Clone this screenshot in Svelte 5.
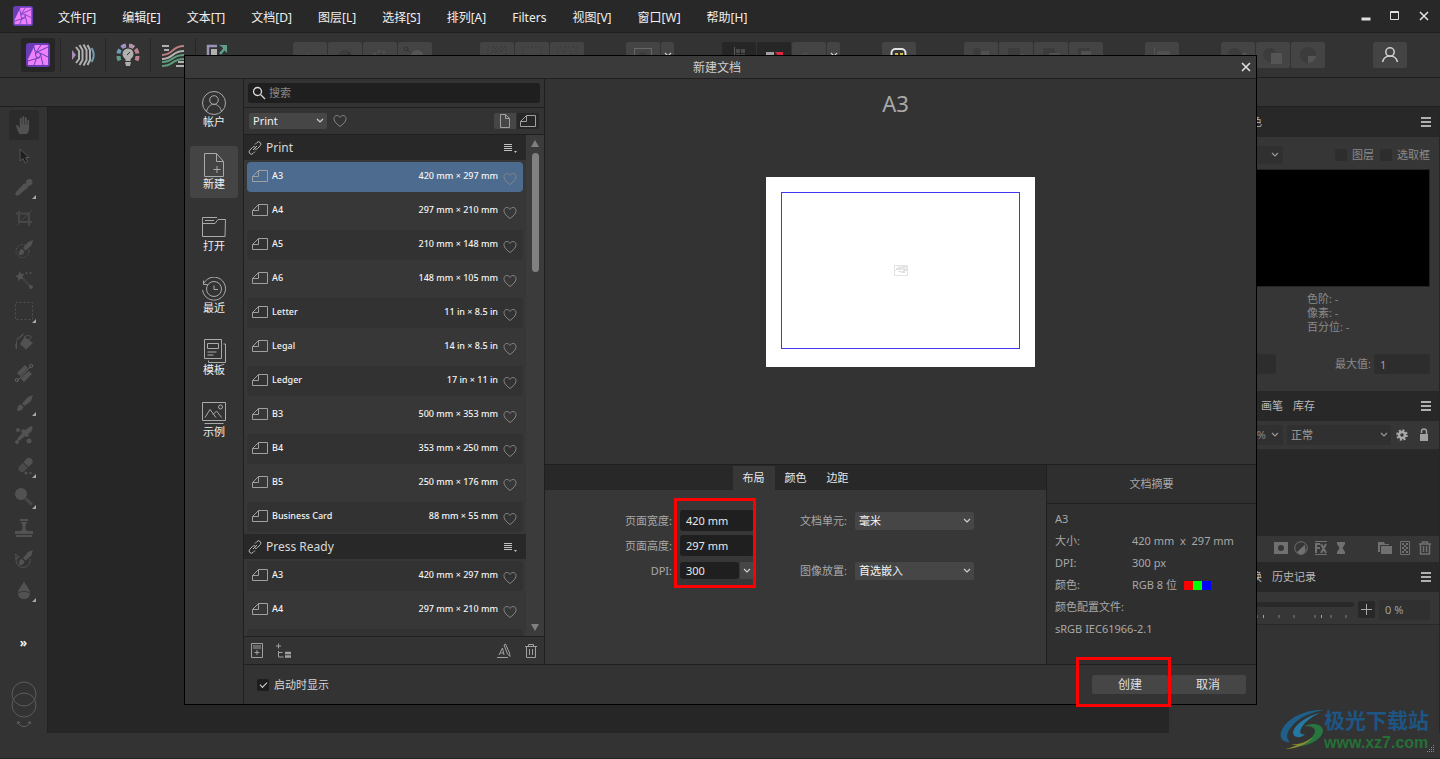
<script lang="ts">
	interface Preset {
		name: string;
		size: string;
	}

	interface Group {
		title: string;
		presets: Preset[];
	}

	const menus = ['文件[F]', '编辑[E]', '文本[T]', '文档[D]', '图层[L]', '选择[S]', '排列[A]', 'Filters', '视图[V]', '窗口[W]', '帮助[H]'];

	const groups: Group[] = [
		{
			title: 'Print',
			presets: [
				{ name: 'A3', size: '420 mm × 297 mm' },
				{ name: 'A4', size: '297 mm × 210 mm' },
				{ name: 'A5', size: '210 mm × 148 mm' },
				{ name: 'A6', size: '148 mm × 105 mm' },
				{ name: 'Letter', size: '11 in × 8.5 in' },
				{ name: 'Legal', size: '14 in × 8.5 in' },
				{ name: 'Ledger', size: '17 in × 11 in' },
				{ name: 'B3', size: '500 mm × 353 mm' },
				{ name: 'B4', size: '353 mm × 250 mm' },
				{ name: 'B5', size: '250 mm × 176 mm' },
				{ name: 'Business Card', size: '88 mm × 55 mm' }
			]
		},
		{
			title: 'Press Ready',
			presets: [
				{ name: 'A3', size: '420 mm × 297 mm' },
				{ name: 'A4', size: '297 mm × 210 mm' }
			]
		}
	];

	// 24 x 24, stroked
	const sections = [
		{ label: '帐户', icon: '<circle cx="12" cy="12" r="11.5"/><circle cx="12" cy="9" r="4.3"/><path d="M4.5 20.5c1-4.500 4-7.200 7.500-7.200s6.500 2.700 7.500 7.200"/>' },
		{ label: '新建', icon: '<path d="M2.500.5h12l7 8v15h-19zM14.500.5v8h7M15 13v7M11.500 16.500h7"/>' },
		{ label: '打开', icon: '<path d="M.5 5.500v16h22.500l.5-17h-7.500l-3 4H.5M.5 5.500V2.500H15M3 5.500h9"/>' },
		{ label: '最近', icon: '<circle cx="12" cy="12" r="7.500"/><path d="M12 8.500v4h4M2 6A11.500 11.500 0 1 1 .6 13M1.500 3.500v4h4"/>' },
		{ label: '模板', icon: '<path d="M2.500.5h17v19h-17zM5.500 4.500h11v5h-11zM5.500 13h9M5.500 16h6M21.500 5h2v18.500h-17v-2"/>' },
		{ label: '示例', icon: '<path d="M.5 1.500h23v18H.5zM3 16.500l5-8 6 8M11 13.500l3.500-3.500 5 6.500M2.500 22.500h19"/><circle cx="18.500" cy="6" r="2"/>' }
	];

	// 18 x 18, filled
	const tools = [
		{ label: '手形', more: false, icon: '<path d="M4.500 18C3 15.500 1.500 11.500 1.300 10.200c0-1.200 1.300-1.500 1.900-.4l1.600 2.400V2.600c0-1.300 1.900-1.300 1.900 0v5.600h.6V1.300c0-1.500 2-1.500 2 0v6.900h.6V2.200c0-1.400 1.900-1.400 1.900 0v6.500h.6V4.600c0-1.300 1.700-1.300 1.700 0v8c0 2.500-1.200 4.200-2.300 5.400z"/>' },
		{ label: '移动', more: false, icon: '<path fill="#1f1f1f" stroke="#555" d="M5 2v12l3-2.500 2 4.500 2.500-1.200-2-4.300H14z"/>' },
		{ label: '颜色拾取器', more: true, icon: '<path d="M11 3c3-3.500 7-2 6.500 1.500-.2 2-2.500 3.500-4.500 3.500l-2-1.500zM9.500 5l4 4-9 7.500-2.500 1.500-2-2 1.500-2.500z"/>' },
		{ label: '裁剪', more: false, icon: '<path fill="none" stroke="#474747" stroke-width="2" d="M4 2v11h13M1 4.500h13V17"/><path stroke="#474747" d="M2 16L17 1"/>' },
		{ label: '选择画笔', more: false, icon: '<circle cx="7.500" cy="11" r="6.500" fill="none" stroke="#555" stroke-dasharray="2 1.500"/><path d="M18 0l-5 2-5 6 2.500 2.500 6-5zM7 9l2.500 2.500c-1 3-3 4-6 3.500.8-1 .5-1.500.7-3C4.500 10 5.500 9 7 9z"/>' },
		{ label: '魔棒', more: false, icon: '<path d="M5 0l1.200 3 3.300-.4-2 2.700 1.400 3-3.200-.6L3.300 10 3 6.800 0 5.300l3-1.300z"/><path stroke="#3f3f3f" stroke-width="2.500" d="M8 8l8 8"/><circle cx="16" cy="16" r="2"/><circle cx="11.500" cy="2" r="1"/><circle cx="15.500" cy="2" r="1"/>' },
		{ label: '选框', more: true, icon: '<rect x=".5" y=".5" width="17" height="17" fill="none" stroke="#505050" stroke-dasharray="2 2"/>' },
		{ label: '填充', more: false, icon: '<path d="M9 0L2 5.500 0 13l2 4V7l6-4.500zM9.500 4l8.500 6-7 6.500L5 11z"/><path fill="none" stroke="#555" d="M9 4c3-2 7-2 7 .5S10 7 10 5"/>' },
		{ label: '渐变', more: false, icon: '<path d="M10 1l4 4-8 8-4-4zM14 7l3 3-8 8-4-4z"/><path stroke="#333" stroke-width="2" d="M3 16L16 2"/><path stroke="#666" d="M3 16L15 3"/><circle cx="1.800" cy="16.200" r="1.500" fill="#333" stroke="#666"/><circle cx="16.200" cy="1.800" r="1.500" fill="#333" stroke="#666"/>' },
		{ label: '画笔', more: true, icon: '<path d="M18 0l-5 2-6 6.500L9.500 11l6.500-5zM6 9.500L8.500 12c-.5 3-3.500 4.500-7 3.500 1-1 .6-1.800 1.300-3.300C3.400 10.200 4.700 9.500 6 9.500z"/>' },
		{ label: '像素', more: false, icon: '<path d="M16 0l2 1-2 5-3 2 1 2-3 1-1-1-6 5-2-2 5-6-1-2 2-2 2 1z"/><circle cx="14" cy="15" r="2.500"/><circle cx="2" cy="16" r="2"/><circle cx="3" cy="4" r="2"/>' },
		{ label: '橡皮擦', more: true, icon: '<path d="M12 1.500c1-1 3-1 4.500.5s1.500 3 .5 4.500L13.500 10 8.500 5z"/><path fill="#4a4a4a" d="M7.800 5.700l5 5-3.500 3.500c-1.500 1.300-3.500 1.300-5-.2s-1.200-3.500 0-4.700z"/><circle cx="11" cy="16" r="1.500"/><circle cx="15.500" cy="16" r="1.200"/>' },
		{ label: '减淡', more: true, icon: '<circle cx="6" cy="6" r="6"/><path fill="#484848" d="M11.500 9.500l6.500 6-2 2.500-6.500-6.500z"/>' },
		{ label: '克隆', more: false, icon: '<path d="M5 0h8v2H5zM6 3h6l-1.500 4v3l2 2H18v3H0v-3h5.500l2-2V7zM1 16h16v2H1z"/>' },
		{ label: '撤消画笔', more: false, icon: '<path fill="none" stroke="#555" d="M2 7a7 7 0 1 0 13 2M0 4l4 3-4 2z"/><path d="M18 0l-5 2-5 6 2.500 2.500 6-5zM7 9l2.500 2.500c-1 3-3 4-6 3.500 1-1 .5-1.500.7-3C4.500 10 5.500 9 7 9z"/>' },
		{ label: '模糊', more: true, icon: '<path d="M9 0c1 4 6 7.500 6 12 0 4-2.500 6-6 6s-6-2-6-6C3 7.500 8 4 9 0z"/><path fill="none" stroke="#333" d="M3.500 12c3-2 8-2 11 0"/>' }
	];

	const personas = [
		{
			label: 'Liquify',
			icon: '<path fill="#a98cbc" d="M1 7l4 5-4 5z"/><g fill="none" stroke="#b0b0b0" stroke-width="2"><path d="M5 4l3 4v8l-3 4M8.500 2l3 5v10l-3 5M12.500 1.500l3 5.500v10l-3 5.500M16.500 2l2.500 5v10l-2.500 5"/><path stroke="#6e9fb8" d="M20.500 5c3 4 3 10 0 14"/></g>'
		},
		{
			label: 'Develop',
			icon: '<g fill="none" stroke-width="4"><path stroke="#5d9d84" d="M3.500 17.500A10 10 0 0 1 2.500 13"/><path stroke="#6e9fb8" d="M2.500 10.500A10 10 0 0 1 4 6.500"/><path stroke="#a292c4" d="M5.500 4.500A10 10 0 0 1 10 2.500"/><path stroke="#b793b0" d="M13 2.500A10 10 0 0 1 18 4.500"/><path stroke="#bd8490" d="M19.500 6A10 10 0 0 1 21.500 10.500M21.500 13A10 10 0 0 1 20.500 17.500"/></g><circle cx="12" cy="11" r="5.500" fill="#b0b0b0"/><path fill="#b0b0b0" d="M9.500 15h5v3h-5zM9 19h6l-1 4h-4z"/><path stroke="#333" d="M11 12l3-3"/>'
		},
		{
			label: 'Tone Mapping',
			icon: '<g fill="none" stroke-width="2"><path stroke="#b0b0b0" d="M1 3h7M3 7h5M17 19h6M15 23h8M1 16c12 0 9-8 22-8"/><path stroke="#bd8080" d="M1 12c12 0 9-9 22-9"/><path stroke="#5d9d7c" d="M1 19c12 0 9-7 22-7M1 23c12 0 9-7 22-7"/></g>'
		},
		{
			label: 'Export',
			icon: '<path fill="none" stroke="#9a93b8" stroke-width="2.500" d="M2 20V3h9"/><path fill="#b0b0b0" d="M5 6h6v14H5z"/><path fill="none" stroke="#5d9d8c" stroke-width="2.500" d="M14 11l6-7"/><path fill="#5d9d8c" d="M13 2h8v8l-2-2-3-4z"/>'
		}
	];

	const toolGroups = [
		{ wide: true, items: ['<path stroke="#4f4f4f" d="M5 14l8-4"/>', '<circle cx="12" cy="14" r="7"/><path fill="#353535" d="M12 14l5-6v8z"/>', '<circle cx="12" cy="14" r="6" stroke-dasharray="3 2" stroke="#4f4f4f" stroke-width="3" fill="none"/>', '<path fill="none" stroke="#333" d="M4 6l8 8"/><circle cx="3" cy="6" r="2" fill="none" stroke="#333"/><circle cx="14" cy="14" r="7" fill="#555"/>'] },
		{ wide: true, items: ['<rect x="3" y="4" width="18" height="14" fill="none" stroke="#383838" stroke-dasharray="2 2"/><path stroke="#383838" d="M6 10l5-5M10 10l5-5M14 10l5-5"/>', '<rect x="3" y="4" width="18" height="14" fill="none" stroke="#383838" stroke-dasharray="2 2"/>', '<path fill="none" stroke="#383838" stroke-dasharray="2 2" d="M3 14V4h18v10M8 14V8h8v6"/>'] },
		{ wide: false, drop: true, items: ['<rect x="3.500" y="5.500" width="17" height="14" fill="none" stroke="#666"/><circle cx="12" cy="13" r="4"/>'] },
		{ wide: true, drop: true, dark: 2, items: ['<path stroke="#5a5a5a" d="M7.500 4v14"/><path fill="#4a4a4a" d="M9 6h4v4H9zM14 6h4v4h-4zM9 11h4v4H9zM14 11h4v4h-4z"/>', '<path fill="#a0a0a0" d="M4 9h8v10H4z"/><path fill="#e02840" d="M13 9h8v10z"/>', '<path stroke="#555" d="M5 12l5-2"/>'] },
		{ wide: false, items: ['<rect x="4.500" y="6" width="14" height="14" rx="4" fill="#333" stroke="#e0e0e0" stroke-width="2"/><path fill="#d8b84a" d="M8 10h3v3H8zM13 10h3v3h-3z"/>'] },
		{ wide: true, items: ['<path fill="#505050" d="M10 8h10v10H10z"/><circle cx="8" cy="9" r="4"/>', '<path d="M4 5h12v12H4z"/><path fill="#505050" d="M16 11h5v6h-5z"/>', '<path d="M4 5h12v10H4z"/><path fill="#505050" d="M10 10h11v8H10z"/>', '<path d="M4 5h12v10H4z"/><path fill="#505050" d="M7 8h10v8H7z"/>'] },
		{ wide: false, items: ['<path stroke="#555" d="M4.500 4v14"/><path fill="#505050" d="M7 8h13v5H7z"/>'] },
		{ wide: false, items: ['<circle cx="9" cy="12" r="7"/><path fill="#555" d="M17 10h3v8h-3z"/>', '<circle cx="9" cy="12" r="7"/><path fill="#555" d="M10 10h11v11H10z"/>', '<circle cx="12" cy="12" r="8"/><path fill="#555" d="M12 13h8c0 4-4 7-8 7z"/>'] }
	];

	const layerActions = [
		'<path fill-rule="evenodd" d="M0 1h14v12H0zM7 4a3 3 0 1 0 0 6 3 3 0 0 0 0-6z"/>',
		'<circle cx="7" cy="7" r="6.300" fill="none" stroke="#707070"/><path d="M11 3.500v3A4.500 4.500 0 0 1 3 11z"/>',
		'<path d="M1 0h12v1H1zM1 13h12v1H1z"/><path fill="none" stroke="#707070" stroke-width="2" d="M2 12V3h4M2 7h4M7 3l5 9M12 3l-5 9"/>',
		'<path d="M3 1h8v2L8.500 7 11 11v2H3v-2l2.500-4L3 3z"/>'
	];

	const layerManage = [
		'<path d="M0 1h6l1 2h4v1H2v7H0zM3 5h11v8H3z"/>',
		'<path fill="none" stroke="#707070" d="M2.500.5h9v13h-9z"/><path d="M4 2h2v2H4zM8 2h2v2H8zM6 4h2v2H6zM4 6h2v2H4zM8 6h2v2H8zM6 8h2v2H6zM4 10h2v2H4zM8 10h2v2H8z"/>',
		'<path fill="none" stroke="#707070" stroke-width="1.500" d="M1 3h12M4.500 3V1h5v2M2.500 3v10h9V3M5.500 5v6M8.500 5v6"/>'
	];

	const ticks = [77, 99, 114, 135, 151, 166];
	const brightTicks = [84, 142];

	const tabs = ['布局', '颜色', '边距'];

	let activeSection = $state(1);
	let activeTab = $state(0);
	let selected = $state('0-0');
	let search = $state('');
	let category = $state('Print');
	let width = $state('420 mm');
	let height = $state('297 mm');
	let dpi = $state('300');
	let unit = $state('毫米');
	let placement = $state('首选嵌入');
	let showOnStart = $state(true);
</script>

{#snippet chevron()}
	<svg class="chevron" viewBox="0 0 8 6" width="8" height="6" aria-hidden="true"><path d="M1 1l3 3 3-3" /></svg>
{/snippet}

{#snippet heart()}
	<svg class="heart" viewBox="0 0 14 14" width="14" height="14" aria-hidden="true">
		<path d="M7 12.500C4.500 10.500 1 8 1 4.600 1 2.800 2.200 1.500 3.900 1.500 5.200 1.500 6.300 2.200 7 3.400c.7-1.200 1.800-1.900 3.100-1.900C11.800 1.500 13 2.800 13 4.600c0 3.400-3.500 5.900-6 7.900z" />
	</svg>
{/snippet}

{#snippet landscape()}
	<svg class="page-icon" viewBox="0 0 17 14" width="17" height="14" aria-hidden="true">
		<path d="M6.500 1.500h9v11H.5V7.500zM6.500 1.500v6H.5" />
	</svg>
{/snippet}

{#snippet appLogo(size: number)}
	<svg viewBox="0 0 24 24" width={size} height={size} aria-hidden="true">
		<rect width="24" height="24" rx="3" fill="#6a3db8" />
		<path fill="#ee80fb" d="M9 2h13v20H2v-6z" />
		<path fill="none" stroke="#6a3db8" d="M8 4l2 8M15 2l-5.500 8M22 4l-11 5M22 14l-8-4M17 22l-2.500-11M2 18l12-3.500M8 22l3-8" />
		<circle cx="12" cy="12" r="2.500" fill="#ee80fb" stroke="#6a3db8" />
	</svg>
{/snippet}

{#snippet burger()}
	<button class="burger" aria-label="面板选项"><i></i><i></i><i></i></button>
{/snippet}

<div class="app">
	<header class="titlebar">
		<span class="logo">{@render appLogo(20)}</span>
		<nav class="menus">
			{#each menus as menu}
				<button>{menu}</button>
			{/each}
		</nav>
		<div class="window-controls">
			<button aria-label="最小化"><svg viewBox="0 0 10 10" width="10" height="10"><path d="M.5 8h9" stroke-width="3" /></svg></button>
			<button aria-label="最大化"><svg viewBox="0 0 10 10" width="10" height="10"><path d="M.5.5h8v8h-8zM0 1.500h9" /></svg></button>
			<button aria-label="关闭"><svg viewBox="0 0 10 10" width="10" height="10"><path d="M1 1l8 8M9 1L1 9" stroke-width="1.600" /></svg></button>
		</div>
	</header>

	<div class="toolbar">
		<div class="personas">
			<button class="persona current" aria-label="Photo">{@render appLogo(24)}</button>
			{#each personas as persona}
				<span class="divider"></span>
				<button class="persona" aria-label={persona.label}>
					<svg viewBox="0 0 24 24" width="24" height="24">{@html persona.icon}</svg>
				</button>
			{/each}
		</div>
		{#each toolGroups as group, g}
			<div class="tool-group" class:wide={group.wide}>
				{#each group.items as item, i}
					<button class:dark={i < (group.dark ?? 0)} aria-label="工具栏 {g + 1}-{i + 1}">
						<svg viewBox="0 0 24 24" width="24" height="24" fill="#3c3c3c">{@html item}</svg>
					</button>
				{/each}
				{#if group.drop}
					<button class="drop" aria-label="更多选项">{@render chevron()}</button>
				{/if}
			</div>
		{/each}
		<div class="tool-group wide">
			<button aria-label="帐户">
				<svg viewBox="0 0 24 24" width="24" height="24" fill="none" stroke="#d0d0d0" stroke-width="1.500">
					<circle cx="12" cy="9" r="4.200" /><path d="M4.500 19c1-4 4-6 7.500-6s6.500 2 7.500 6" />
				</svg>
			</button>
		</div>
	</div>

	<div class="context"></div>

	<div class="workspace">
		<aside class="tools">
			{#each tools as tool, i}
				<button class="tool" class:current={i === 0} aria-label={tool.label}>
					<svg viewBox="0 0 18 18" width="18" height="18" fill="#525252">{@html tool.icon}</svg>
					{#if tool.more}<span class="corner"></span>{/if}
				</button>
			{/each}
			<button class="expand" aria-label="更多工具">»</button>
			<svg class="wells" viewBox="0 0 28 50" width="28" height="50" aria-hidden="true">
				<circle cx="14" cy="14" r="12" /><circle cx="14" cy="25" r="12" />
				<path d="M8 42c1 6 11 6 12 0M7 44l1-2.500 2.500 1.500M21 44l-1-2.500-2.500 1.500" />
			</svg>
		</aside>

		<main class="canvas"></main>

		<aside class="panels">
			<div class="panel-head"><div class="panel-tabs"><button>颜色</button></div>{@render burger()}</div>
			<div class="histogram">
				<div class="histogram-top">
					<button class="well" aria-label="通道">{@render chevron()}</button>
					<label><input type="checkbox" />图层</label>
					<label><input type="checkbox" />选取框</label>
				</div>
				<div class="graph"></div>
				<div class="stats">
					<span>色阶: -</span>
					<span>像素: -</span>
					<span>百分位: -</span>
				</div>
				<div class="limits">
					<input class="min" aria-label="最小值" />
					<label for="max">最大值:</label>
					<input id="max" value="1" />
				</div>
			</div>

			<div class="panel-head"><div class="panel-tabs brushes"><button>画笔</button><button>库存</button></div>{@render burger()}</div>
			<div class="layer-bar">
				<button class="well opacity">% {@render chevron()}</button>
				<span class="select blend">
					<select aria-label="混合模式"><option>正常</option></select>
					{@render chevron()}
				</span>
				<button class="mini" aria-label="混合选项">
					<svg viewBox="0 0 14 14" width="12" height="12" fill="none" stroke="#a8a8a8">
						<circle cx="7" cy="7" r="3.500" stroke-width="3" /><circle cx="7" cy="7" r="5.500" stroke-width="2.500" stroke-dasharray="2.300 2" />
					</svg>
				</button>
				<button class="mini" aria-label="锁定">
					<svg viewBox="0 0 14 14" width="14" height="14"><path fill="#a0a0a0" d="M3 6h8v7H3z" /><path fill="none" stroke="#a0a0a0" stroke-width="1.500" d="M4.500 5V3.500a2.500 2.500 0 0 1 5 0V6" /></svg>
				</button>
			</div>
			<div class="layers"></div>
			<div class="layer-actions">
				{#each layerActions as action, i}
					<button aria-label="图层操作 {i + 1}"><svg viewBox="0 0 14 14" width="14" height="14" fill="#707070">{@html action}</svg></button>
				{/each}
				<span class="spacer"></span>
				{#each layerManage as action, i}
					<button aria-label="图层管理 {i + 1}"><svg viewBox="0 0 14 14" width="14" height="14" fill="#707070">{@html action}</svg></button>
				{/each}
			</div>

			<div class="panel-head"><div class="panel-tabs"><button>变换</button><button>历史记录</button></div>{@render burger()}</div>
			<div class="history">
				<div class="slider">
					<input type="range" min="0" max="100" value="0" aria-label="历史位置" />
					<svg viewBox="0 0 174 3" width="174" height="3" aria-hidden="true">
						{#each ticks as x}<rect {x} width="2" height="3" fill="#5a5a5a" />{/each}
						{#each brightTicks as x}<rect {x} width="1" height="3" fill="#a0a0a0" />{/each}
					</svg>
				</div>
				<button class="plus" aria-label="添加"><svg viewBox="0 0 11 11" width="11" height="11"><path d="M5.500 0v11M0 5.500h11" stroke="#a8a8a8" /></svg></button>
				<input value="0 %" aria-label="位置" />
			</div>
			<div class="empty"></div>
		</aside>
	</div>

	<footer class="status">
		<svg viewBox="0 0 8 8" width="8" height="8" fill="#8a8a8a" aria-hidden="true">
			<path d="M6 0h1v1H6zM4 2h1v1H4zM6 2h1v1H6zM2 4h1v1H2zM4 4h1v1H4zM6 4h1v1H6zM0 6h1v1H0zM2 6h1v1H2zM4 6h1v1H4zM6 6h1v1H6z" />
		</svg>
	</footer>

	<div class="dialog" role="dialog" aria-labelledby="dialog-title">
		<div class="dialog-title">
			<h1 id="dialog-title">新建文档</h1>
			<button aria-label="关闭对话框"><svg viewBox="0 0 10 10" width="10" height="10"><path d="M1 1l8 8M9 1L1 9" /></svg></button>
		</div>

		<nav class="sections">
			{#each sections as section, i}
				<button class:current={activeSection === i} onclick={() => (activeSection = i)}>
					<svg viewBox="0 0 24 24" width="24" height="24">{@html section.icon}</svg>
					{section.label}
				</button>
			{/each}
		</nav>

		<div class="presets">
			<div class="search-row">
				<label class="search">
					<svg viewBox="0 0 14 14" width="14" height="14" aria-hidden="true"><circle cx="5.500" cy="5.500" r="4" /><path d="M8.500 8.500l4.500 4.500" /></svg>
					<input type="text" placeholder="搜索" aria-label="搜索" bind:value={search} />
				</label>
			</div>
			<div class="category-row">
				<span class="select category">
					<select aria-label="类别" bind:value={category}><option>Print</option></select>
					{@render chevron()}
				</span>
				<button class="fav" aria-label="收藏">{@render heart()}</button>
				<button class="orient current" aria-label="纵向">
					<svg class="page-icon" viewBox="0 0 12 14" width="12" height="14"><path d="M1.500.5h5l4 4v9h-9zM6.500.5v4h4" /></svg>
				</button>
				<button class="orient" aria-label="横向">{@render landscape()}</button>
			</div>

			<div class="list-area">
				<div class="list">
					{#each groups as group, g}
						<h2>
							<svg viewBox="0 0 14 14" width="14" height="14" aria-hidden="true">
								<path d="M7 3.500L9 1.500a2 2 0 0 1 3.200 3.200L9.500 7.500a2 2 0 0 1-3.200 0M7 10.500L5 12.500a2 2 0 0 1-3.200-3.200L4.500 6.500a2 2 0 0 1 3.200 0M5 9l4-4" />
							</svg>
							{group.title}
							<button aria-label="{group.title} 选项">
								<svg viewBox="0 0 13 10" width="13" height="10" fill="#c0c0c0"><path d="M0 1h8v1H0zM0 3h8v1H0zM0 5h8v1H0zM0 7h8v1H0zM10 8h3l-1.500 2z" /></svg>
							</button>
						</h2>
						<ul>
							{#each group.presets as preset, i}
								<li class:striped={i % 2 === 0} class:selected={selected === `${g}-${i}`}>
									<button class="preset" onclick={() => (selected = `${g}-${i}`)}>
										{@render landscape()}
										<span class="name">{preset.name}</span>
										<span class="size">{preset.size}</span>
									</button>
									<button class="fav" aria-label="收藏 {preset.name}">{@render heart()}</button>
								</li>
							{/each}
							{#if g === groups.length - 1}
								<li class="striped"></li>
							{/if}
						</ul>
					{/each}
				</div>
				<div class="scrollbar">
					<span class="up"></span>
					<span class="thumb"></span>
					<span class="down"></span>
				</div>
			</div>

			<div class="list-actions">
				<button aria-label="添加预设"><svg viewBox="0 0 16 16" width="16" height="16"><path d="M2.500.5h11v14h-11zM4 3h8M4 5h8M8 7v5M5.500 9.500h5" /></svg></button>
				<button aria-label="添加类别"><svg viewBox="0 0 16 16" width="16" height="16"><path d="M0 3h5M2.500.5v5M2.500 8v6h5M2.500 9.500h4" /><path d="M9 10h6M9 13.500h6" stroke-width="2.500" /></svg></button>
				<span class="spacer"></span>
				<button aria-label="重命名"><svg viewBox="0 0 16 16" width="16" height="16"><path d="M1 14.500h11M3 12l3.500-7L8 12M4 10h4M8 2l1.500-1 4 9 .5 3.500-2.500-2.500z" /></svg></button>
				<button aria-label="删除"><svg viewBox="0 0 16 16" width="16" height="16"><path d="M2 3.500h12M5.500 3.500v-2h5v2M3.500 3.500v11h9v-11M6.500 6v6M9.500 6v6" /></svg></button>
			</div>
		</div>

		<div class="preview">
			<h2>A3</h2>
			<div class="paper">
				<div class="margins">
					<svg viewBox="0 0 14 11" width="14" height="11" aria-hidden="true"><rect x=".5" y=".5" width="13" height="10" fill="none" stroke="#e4e4e4" /><path fill="#e2e2e2" fill-rule="evenodd" d="M1 1h12v5h-2v2H7V7H4V6H1V5h1V3h2V2h3v1h1v2H2v1h7V4H8V2h4v2h-1V2H9z" /></svg>
				</div>
			</div>
		</div>

		<div class="settings">
			<div class="tabs" role="tablist">
				{#each tabs as tab, i}
					<button role="tab" aria-selected={activeTab === i} class:current={activeTab === i} onclick={() => (activeTab = i)}>{tab}</button>
				{/each}
			</div>
			<div class="form">
				<label for="page-width">页面宽度:</label>
				<input id="page-width" bind:value={width} />
				<label for="unit">文档单元:</label>
				<span class="select">
					<select id="unit" bind:value={unit}><option>毫米</option></select>
					{@render chevron()}
				</span>
				<label for="page-height">页面高度:</label>
				<input id="page-height" bind:value={height} />
				<label for="dpi">DPI:</label>
				<span class="combo">
					<input id="dpi" bind:value={dpi} />
					<button aria-label="DPI 选项">{@render chevron()}</button>
				</span>
				<label for="placement">图像放置:</label>
				<span class="select">
					<select id="placement" bind:value={placement}><option>首选嵌入</option></select>
					{@render chevron()}
				</span>
				<div class="mark"></div>
			</div>
		</div>

		<section class="summary">
			<h2>文档摘要</h2>
			<dl>
				<dt class="line">A3</dt>
				<dt>大小:</dt>
				<dd>420 mm&nbsp; x &nbsp;297 mm</dd>
				<dt>DPI:</dt>
				<dd>300 px</dd>
				<dt>颜色:</dt>
				<dd>RGB 8 位 <span class="rgb"><i class="r"></i><i class="g"></i><i class="b"></i></span></dd>
				<dt class="line">颜色配置文件:</dt>
				<dd class="line">sRGB IEC61966-2.1</dd>
			</dl>
		</section>

		<div class="dialog-footer">
			<label><input type="checkbox" bind:checked={showOnStart} />启动时显示</label>
			<span class="create"><button>创建</button><span class="mark"></span></span>
			<button>取消</button>
		</div>
	</div>

	<div class="watermark">
		<svg viewBox="0 0 44 42" width="44" height="42" aria-hidden="true">
			<path fill="#1f5f8c" d="M44 1C26 0 6 9 1 23c-2 7 4 11 9 10C4 28 8 20 17 12 24 6 34 3 44 1z" />
			<path fill="#2478a4" d="M40 4C27 7 15 15 13 23c0 6 8 7 12 2-4 1-6-1-4-5 2-5 9-12 19-16z" />
			<path fill="#27753f" d="M24 17c9-4 18-2 19 4 0 8-12 16-25 16 9-4 17-10 17-15 0-4-5-5-11-5z" />
			<path fill="#8a8f2e" d="M5 40c10 0 22-4 28-12-8 6-15 8-22 7 2 1 4 1 6 1-4 2-8 3-12 4z" />
		</svg>
		<div>
			<strong>极光下载站</strong>
			<em>www.xz7.com</em>
		</div>
	</div>
</div>

<style>
	:global(body) {
		background: #333;
	}

	.app {
		--line: #1f1f1f;
		--bar: #282828;
		--face: #333;
		--control: #464646;
		position: relative;
		display: grid;
		grid-template-rows: 33px 45px 29px 1fr 26px;
		height: 100vh;
		min-height: 740px;
		overflow: hidden;
		box-sizing: border-box;
		background: var(--face);
		color: #d8d8d8;
		font: 11px/14px 'Noto Sans', 'Noto Sans CJK SC', sans-serif;
	}

	.app :is(div, span, button, input, select, h1, h2, aside, header, footer) {
		box-sizing: border-box;
	}

	button,
	input,
	select {
		margin: 0;
		padding: 0;
		border: 0;
		background: none;
		color: inherit;
		font: inherit;
		min-width: 0;
	}

	button {
		display: flex;
		align-items: center;
		justify-content: center;
	}

	svg {
		flex: none;
		display: block;
	}

	h1,
	h2,
	ul,
	dl,
	dd {
		margin: 0;
		padding: 0;
		font-weight: 400;
	}

	input[type='checkbox'] {
		appearance: none;
		width: 12px;
		height: 12px;
		border-radius: 2px;
		background: #1d1d1d;
		display: grid;
		place-items: center;
	}

	input[type='checkbox']:checked::after {
		content: '';
		width: 6px;
		height: 3px;
		border: solid #d8d8d8;
		border-width: 0 0 1px 1px;
		transform: translateY(-1px) rotate(-45deg);
	}

	.spacer {
		flex: 1;
	}

	.chevron {
		fill: none;
		stroke: #d0d0d0;
		stroke-width: 1.2;
		pointer-events: none;
	}

	.heart {
		fill: none;
		stroke: #858585;
	}

	.page-icon {
		fill: none;
		stroke: #a0a0a0;
	}

	.select {
		display: grid;
		grid-template-columns: 1fr;
		align-items: center;
		height: 18px;
		border-radius: 2px;
		background: var(--control);
	}

	.select > :global(*) {
		grid-area: 1 / 1;
	}

	.select select {
		appearance: none;
		width: 100%;
		padding: 0 16px 0 4px;
		outline: none;
	}

	.select .chevron {
		justify-self: end;
		margin-right: 3px;
	}

	.mark {
		position: absolute;
		border: 3px solid #f00;
		pointer-events: none;
	}

	/* application frame */

	.titlebar {
		display: flex;
		align-items: center;
		padding: 0 11px 0 13px;
		background: var(--bar);
		border-bottom: 1px solid var(--line);
		color: #f0f0f0;
		font-size: 12px;
	}

	.menus {
		display: flex;
		gap: 26px;
		margin-left: 25px;
		padding-top: 3px;
		flex: 1;
	}

	.menus button {
		white-space: nowrap;
	}

	.window-controls {
		display: flex;
		gap: 19px;
	}

	.window-controls svg {
		fill: none;
		stroke: #e0e0e0;
	}

	.toolbar {
		display: flex;
		align-items: center;
		padding-left: 21px;
		border-bottom: 1px solid var(--line);
	}

	.personas {
		display: flex;
		align-items: center;
		gap: 5px;
		margin-right: 10px;
	}

	.persona {
		width: 34px;
		height: 34px;
		border-radius: 3px;
	}

	.persona.current {
		background: #262626;
	}

	.divider {
		width: 1px;
		height: 34px;
		background: #262626;
	}

	.tool-group {
		display: flex;
		gap: 1px;
		margin-left: 42px;
	}

	.tool-group.wide {
		margin-left: 48px;
	}

	.tool-group button {
		width: 34px;
		height: 26px;
		border-radius: 2px;
		background: #444;
	}

	.tool-group .dark {
		background: #262626;
	}

	.tool-group .drop {
		width: 13px;
	}

	.context {
		border-bottom: 1px solid var(--line);
	}

	.workspace {
		display: flex;
		min-height: 0;
	}

	.tools {
		display: flex;
		flex-direction: column;
		align-items: center;
		gap: 1px;
		width: 48px;
		padding-top: 3px;
		border-right: 1px solid #222;
	}

	.tool {
		position: relative;
		width: 30px;
		height: 30px;
		border-radius: 3px;
	}

	.tool.current {
		background: #2b2b2b;
	}

	.corner {
		position: absolute;
		right: 3px;
		bottom: 3px;
		border: 2px solid #a8a8a8;
		border-top-color: transparent;
		border-left-color: transparent;
	}

	.expand {
		margin-top: 27px;
		height: 20px;
		color: #f0f0f0;
		font-size: 12px;
		font-weight: 700;
	}

	.wells {
		margin-top: 26px;
		fill: none;
		stroke: #5c5c5c;
	}

	.canvas {
		flex: 1;
		background: #262626;
	}

	.panels {
		display: flex;
		flex-direction: column;
		width: 271px;
		background: #363636;
		border-right: 1px solid #262626;
		color: #8a8a8a;
	}

	.panel-head {
		display: flex;
		align-items: center;
		justify-content: space-between;
		height: 30px;
		padding: 0 8px 1px 71px;
		background: var(--bar);
		color: #b8b8b8;
	}

	.panel-tabs {
		display: flex;
		gap: 10px;
	}

	.panel-tabs.brushes {
		margin-left: 21px;
	}

	.burger {
		flex-direction: column;
		gap: 2px;
	}

	.burger i {
		width: 10px;
		height: 2px;
		background: #b0b0b0;
	}

	.histogram {
		height: 254px;
		padding: 7px 9px 0 10px;
	}

	.histogram-top {
		display: flex;
		align-items: center;
		justify-content: flex-end;
		height: 22px;
	}

	.histogram-top label {
		display: flex;
		align-items: center;
		gap: 5px;
		margin-left: 6px;
	}

	.histogram input {
		background: #2d2d2d;
	}

	.well {
		width: 104px;
		height: 18px;
		justify-content: flex-end;
		padding-right: 4px;
		border-radius: 2px;
		background: #303030;
	}

	.histogram .well {
		margin-right: 46px;
	}

	.graph {
		height: 118px;
		margin-top: 3px;
		border: 1px solid #242424;
		background: #000;
	}

	.stats {
		display: flex;
		flex-direction: column;
		margin: 5px 0 0 128px;
	}

	.limits {
		display: flex;
		align-items: center;
		justify-content: flex-end;
		margin-top: 20px;
	}

	.limits input {
		width: 56px;
		height: 20px;
		padding-left: 6px;
		border-radius: 3px;
		color: #a0a0a0;
	}

	.limits label {
		margin: 0 3px 0 59px;
	}

	.layer-bar {
		display: flex;
		align-items: center;
		justify-content: flex-end;
		height: 29px;
		padding-right: 4px;
		border-bottom: 1px solid #2b2b2b;
	}

	.opacity {
		height: 20px;
		margin-right: 4px;
		gap: 5px;
	}

	.blend {
		width: 104px;
		height: 20px;
		background: #303030;
		color: #a0a0a0;
	}

	.panels .chevron {
		stroke: #999;
	}

	.mini {
		width: 22px;
		height: 22px;
	}

	.layers {
		height: 86px;
		background: #282828;
	}

	.layer-actions {
		display: flex;
		height: 26px;
		padding: 0 4px 2px 102px;
	}

	.layer-actions button {
		width: 20px;
	}

	.history {
		display: flex;
		align-items: center;
		gap: 4px;
		height: 33px;
		padding: 3px 9px 0 10px;
		border-bottom: 1px solid #282828;
	}

	.slider {
		flex: 1;
		height: 16px;
	}

	.slider input {
		appearance: none;
		display: block;
		width: 100%;
		height: 5px;
		margin-bottom: 8px;
		border-radius: 3px;
		background: #292929;
	}

	.plus {
		width: 17px;
		height: 17px;
		border-radius: 2px;
		background: #282828;
	}

	.history > input {
		width: 51px;
		height: 20px;
		padding-left: 6px;
		border-radius: 3px;
		background: #303030;
		color: #a0a0a0;
	}

	.empty {
		flex: 1;
		background: var(--face);
	}

	.status {
		display: flex;
		align-items: flex-end;
		justify-content: flex-end;
		padding: 0 5px 5px 0;
		border-bottom: 1px solid #242424;
	}

	/* new document dialog */

	.dialog {
		position: absolute;
		inset: 55px 183px 54px 184px;
		display: grid;
		grid-template-columns: 59px 301px 1fr 209px;
		grid-template-rows: 23px 1fr 200px 39px;
		border: 1px solid #000;
		background: var(--face);
	}

	.dialog-title {
		grid-column: 1 / -1;
		display: grid;
		grid-template-columns: 16px 1fr 16px;
		align-items: center;
		padding: 0 2px;
		background: #3a3a3a;
		border-bottom: 1px solid var(--line);
		color: #d0d0d0;
	}

	.dialog-title h1 {
		grid-column: 2;
		font-size: 12px;
		text-align: center;
		padding: 1px 7px 0 0;
	}

	.dialog-title svg {
		stroke: #e0e0e0;
		stroke-width: 1.6;
	}

	.sections {
		grid-row: 2 / -1;
		display: flex;
		flex-direction: column;
		align-items: center;
		gap: 10px;
		padding-top: 5px;
		border-right: 1px solid var(--line);
	}

	.sections button {
		flex-direction: column;
		width: 48px;
		height: 52px;
		border-radius: 3px;
		color: #eee;
	}

	.sections button.current {
		background: #444;
	}

	.sections svg {
		fill: none;
		stroke: #aaa;
	}

	.presets {
		grid-row: 2 / 4;
		grid-column: 2;
		display: flex;
		flex-direction: column;
		min-height: 0;
		border-right: 1px solid var(--line);
		border-bottom: 1px solid var(--line);
	}

	.search-row {
		padding: 4px 4px 4px;
		border-bottom: 1px solid var(--line);
	}

	.search {
		display: flex;
		align-items: center;
		gap: 3px;
		height: 20px;
		padding-left: 4px;
		border-radius: 3px;
		background: #1f1f1f;
	}

	.search svg {
		fill: none;
		stroke: #d8d8d8;
		stroke-width: 1.3;
	}

	.search input {
		flex: 1;
		outline: none;
	}

	.search input::placeholder {
		color: #888;
	}

	.category-row {
		display: flex;
		align-items: center;
		height: 27px;
		padding: 0 5px;
		border-bottom: 1px solid var(--line);
	}

	.category {
		width: 78px;
		height: 16px;
		color: #f0f0f0;
	}

	.category-row .fav {
		margin: 0 auto 0 6px;
	}

	.orient {
		width: 22px;
		height: 16px;
		border-radius: 0 2px 2px 0;
		background: #272727;
	}

	.orient.current {
		border-radius: 2px 0 0 2px;
		background: var(--control);
		margin-right: 1px;
	}

	.list-area {
		flex: 1;
		display: flex;
		min-height: 0;
		background: #373737;
	}

	.list {
		flex: 1;
		overflow: hidden;
	}

	.list h2 {
		display: flex;
		align-items: center;
		gap: 4px;
		height: 25px;
		padding: 0 9px 0 4px;
		background: var(--bar);
		font-size: 12px;
	}

	.list h2 > svg {
		fill: none;
		stroke: #b8b8b8;
	}

	.list h2 button {
		margin-left: auto;
	}

	.list ul {
		padding: 2px 3px;
		display: flex;
		flex-direction: column;
		gap: 4px;
		list-style: none;
	}

	.list li {
		display: flex;
		height: 30px;
		border-radius: 4px;
	}

	.list li.striped {
		background: #323232;
	}

	.list li.selected {
		background: #4d6b8e;
	}

	.preset {
		flex: 1;
		gap: 3px;
		padding: 0 0 2px 5px;
		color: #f4f4f4;
		font-size: 9px;
		font-weight: 500;
	}

	.name {
		flex: 1;
		text-align: left;
	}

	.list .fav {
		width: 25px;
		padding: 4px 2px 0 0;
	}

	.scrollbar {
		display: flex;
		flex-direction: column;
		align-items: center;
		width: 18px;
		padding: 5px 0;
		background: #3b3b3b;
	}

	.up,
	.down {
		border: 4px solid transparent;
	}

	.up {
		border-top: 0;
		border-bottom: 7px solid #808080;
	}

	.down {
		margin-top: auto;
		border-bottom: 0;
		border-top: 7px solid #808080;
	}

	.thumb {
		width: 7px;
		height: 119px;
		margin-top: 6px;
		border-radius: 4px;
		background: #808080;
	}

	.list-actions {
		display: flex;
		align-items: center;
		gap: 11px;
		height: 28px;
		padding: 0 5px;
		border-top: 1px solid var(--line);
	}

	.list-actions svg {
		fill: none;
		stroke: #a0a0a0;
	}

	.preview {
		grid-column: 3 / -1;
		display: flex;
		flex-direction: column;
		align-items: center;
		border-bottom: 1px solid var(--line);
	}

	.preview h2 {
		margin: 9px 10px 0 0;
		color: #a8a8a8;
		font-size: 22px;
		line-height: 30px;
	}

	.paper {
		width: 269px;
		height: 190px;
		margin-top: 59px;
		padding: 15px 15px 18px;
		background: #fff;
	}

	.margins {
		display: grid;
		place-items: center;
		height: 100%;
		border: 1px solid #4038f0;
	}

	.settings {
		grid-column: 3;
		background: #373737;
		border-right: 1px solid var(--line);
		border-bottom: 1px solid var(--line);
	}

	.tabs {
		display: flex;
		justify-content: center;
		height: 25px;
		padding-top: 1px;
		background: var(--bar);
	}

	.tabs button {
		padding: 0 10px;
		color: #e8e8e8;
	}

	.tabs .current {
		background: #373737;
	}

	.form {
		position: relative;
		display: grid;
		grid-template-columns: 55px 74px 85px 119px;
		grid-auto-rows: 21px;
		gap: 4px 8px;
		align-items: center;
		justify-content: center;
		padding-top: 20px;
	}

	.form label {
		color: #a8a8a8;
		text-align: right;
	}

	.form input {
		height: 21px;
		padding-left: 6px;
		border-radius: 3px;
		background: #1f1f1f;
		color: #e8e8e8;
		width: 100%;
	}

	.form .select {
		color: #f4f4f4;
	}

	.form label[for='page-height'],
	.form label[for='dpi'] {
		grid-column: 1;
	}

	.combo {
		display: flex;
		gap: 1px;
	}

	.form .combo input {
		flex: 1;
		height: 17px;
	}

	.combo button {
		width: 14px;
		background: var(--control);
	}

	.form .mark {
		grid-area: 1 / 2 / 4 / 3;
		inset: -12px -2px -7px -6px;
	}

	.summary {
		grid-column: 4;
		background: #2f2f2f;
		border-bottom: 1px solid var(--line);
		color: #a8a8a8;
	}

	.summary h2 {
		height: 39px;
		border-bottom: 1px solid var(--line);
		font-size: 11px;
		line-height: 38px;
		text-align: center;
	}

	.summary dl {
		display: grid;
		grid-template-columns: 77px 1fr;
		padding: 4px 8px;
		line-height: 22px;
	}

	.line {
		grid-column: 1 / -1;
	}

	.summary dd {
		display: flex;
		align-items: center;
		gap: 7px;
		white-space: nowrap;
	}

	.rgb {
		display: flex;
	}

	.rgb i {
		width: 9px;
		height: 9px;
	}

	.r {
		background: #f00;
	}

	.g {
		background: #0f0;
	}

	.b {
		background: #00f;
	}

	.dialog-footer {
		grid-column: 2 / -1;
		display: flex;
		align-items: center;
		gap: 2px;
		padding: 0 10px 0 13px;
	}

	.dialog-footer label {
		display: flex;
		align-items: center;
		gap: 5px;
		margin-right: auto;
	}

	.dialog-footer button {
		width: 76px;
		height: 19px;
		border-radius: 2px;
		background: var(--control);
		color: #e0e0e0;
		font-size: 12px;
	}

	.create {
		position: relative;
	}

	.create .mark {
		inset: -18px -3px -13px -16px;
	}

	.watermark {
		position: absolute;
		right: 11px;
		bottom: 8px;
		display: flex;
		align-items: center;
		pointer-events: none;
	}

	.watermark div {
		display: flex;
		flex-direction: column;
		gap: 4px;
	}

	.watermark strong,
	.watermark em {
		font-style: normal;
		font-weight: 700;
		white-space: nowrap;
	}

	.watermark strong {
		color: #1d5585;
		font-size: 21px;
		line-height: 22px;
	}

	.watermark em {
		color: #247036;
		font-family: 'Liberation Sans', sans-serif;
		font-size: 16px;
		line-height: 16px;
	}
</style>
